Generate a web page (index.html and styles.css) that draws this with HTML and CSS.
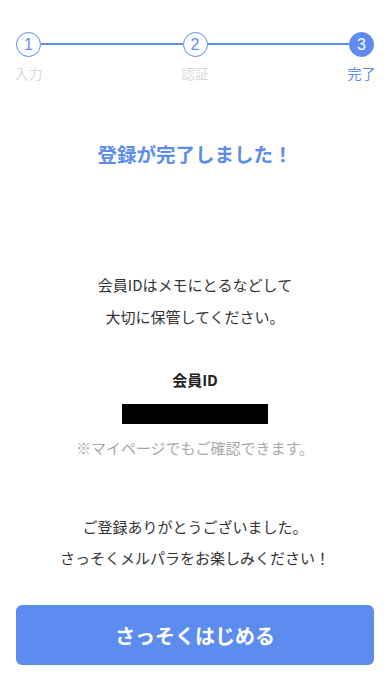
FILE: index.html
```html
<!DOCTYPE html>
<html lang="ja">
<head>
  <meta charset="UTF-8" />
  <meta name="viewport" content="width=device-width, initial-scale=1.0"/>
  <title>登録完了</title>
  <link rel="stylesheet" href="styles.css">
</head>
<body>

  <div class="steps">
    <div class="step">
      <div class="circle">1</div>
      <div class="step-label">入力</div>
    </div>
    <div class="line"></div>
    <div class="step">
      <div class="circle">2</div>
      <div class="step-label">認証</div>
    </div>
    <div class="line"></div>
    <div class="step current">
      <div class="circle">3</div>
      <div class="step-label">完了</div>
    </div>
  </div>

  <h1 class="title">登録が完了しました！</h1>

  <p class="lead">会員IDはメモにとるなどして<br>大切に保管してください。</p>

  <div class="member-label">会員ID</div>
  <div class="member-id"></div>
  <div class="note">※マイページでもご確認できます。</div>

  <p class="thanks">ご登録ありがとうございました。<br>さっそくメルパラをお楽しみください！</p>

  <button class="start-btn">さっそくはじめる</button>

</body>
</html>
```

FILE: styles.css
```css
:root {
  --blue: #5d8cef;
  --text: #333333;
}

body {
  margin: 0;
  padding: 0 16px;
  font-family: "Noto Sans CJK JP", "Noto Sans", sans-serif;
  color: var(--text);
  background: #ffffff;
  text-align: center;
}

/* step indicator */
.steps {
  display: flex;
  align-items: flex-start;
  padding-top: 32px;
}

.step {
  width: 25px;
  display: flex;
  flex-direction: column;
  align-items: center;
}

.circle {
  box-sizing: border-box;
  width: 25px;
  height: 25px;
  border: 1px solid var(--blue);
  border-radius: 50%;
  background: #fff;
  color: var(--blue);
  font-family: "Liberation Sans", sans-serif;
  font-size: 16px;
  line-height: 23px;
}

.step.current .circle {
  background: var(--blue);
  color: #fff;
}

.step-label {
  margin-top: 6px;
  font-size: 14px;
  line-height: 20px;
  white-space: nowrap;
  color: #dadada;
}

.step.current .step-label {
  color: var(--blue);
}

.line {
  flex: 1;
  height: 2px;
  margin-top: 11px;
  background: var(--blue);
}

.title {
  margin: 59px 0 0;
  font-size: 19.5px;
  line-height: 24px;
  font-weight: bold;
  color: var(--blue);
}

.lead {
  margin: 103px 0 0;
  font-size: 15px;
  line-height: 32px;
}

.member-label {
  margin-top: 37px;
  font-size: 15px;
  line-height: 20px;
  font-weight: bold;
  color: #222;
}

.member-id {
  width: 146px;
  height: 20px;
  margin: 14px auto 0;
  background: #000;
}

.note {
  margin-top: 14px;
  font-size: 15px;
  line-height: 20px;
  color: #a8a8a8;
}

.thanks {
  margin: 53px 0 0;
  font-size: 15px;
  line-height: 31px;
}

.start-btn {
  display: block;
  width: 100%;
  height: 60px;
  margin-top: 32px;
  border: none;
  border-radius: 6px;
  background: var(--blue);
  color: #fff;
  font-family: "Noto Sans CJK JP", sans-serif;
  font-size: 20px;
  font-weight: bold;
  cursor: pointer;
}
```
